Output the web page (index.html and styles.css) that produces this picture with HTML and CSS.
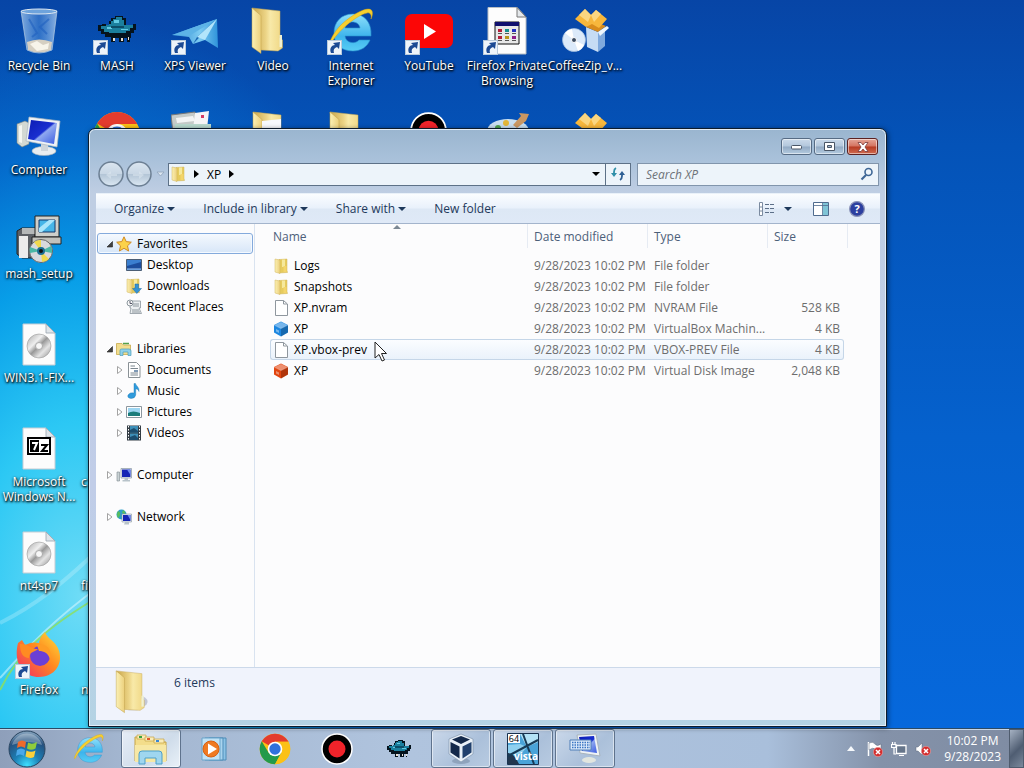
FILE: index.html
```html
<!DOCTYPE html>
<html lang="en">
<head>
    <meta charset="UTF-8">
    <meta name="viewport" content="width=device-width, initial-scale=1.0">
    <title>XP</title>
    <link rel="stylesheet" href="styles.css">
</head>
<body>
    <!-- shared icons -->
    <svg class="sprite" aria-hidden="true">
        <defs>
            <linearGradient id="g-folder" x1="0" x2="1"><stop offset="0" stop-color="#fbf0b4"/><stop offset="1" stop-color="#ecd07c"/></linearGradient>
            <linearGradient id="g-folder2" x1="0" x2="1"><stop offset="0" stop-color="#c9a548"/><stop offset=".45" stop-color="#ecd486"/><stop offset=".6" stop-color="#f8e9a8"/><stop offset="1" stop-color="#efd682"/></linearGradient>
            <linearGradient id="g-ie" x1="0" y1="0" x2="0" y2="1"><stop offset="0" stop-color="#8fe0fb"/><stop offset=".6" stop-color="#3db4ec"/><stop offset="1" stop-color="#58cdf5"/></linearGradient>
            <linearGradient id="g-glass" x1="0" x2="1"><stop offset="0" stop-color="#a9cdf0" stop-opacity=".75"/><stop offset=".5" stop-color="#4d8ddb" stop-opacity=".55"/><stop offset="1" stop-color="#b5d4f4" stop-opacity=".75"/></linearGradient>
            <linearGradient id="g-xps" x1="0" x2="1"><stop offset="0" stop-color="#2a86cf"/><stop offset=".6" stop-color="#7ccbf2"/><stop offset="1" stop-color="#2f93da"/></linearGradient>
            <linearGradient id="g-screen" x1="0" x2="1" y2="1"><stop offset="0" stop-color="#0b1cb4"/><stop offset=".5" stop-color="#1a2fd0"/><stop offset=".55" stop-color="#8fa8f0"/><stop offset="1" stop-color="#3a5be0"/></linearGradient>
            <linearGradient id="g-fox" x1="1" y1="0" x2="0" y2="1"><stop offset="0" stop-color="#ffe23d"/><stop offset=".45" stop-color="#ff8a1f"/><stop offset="1" stop-color="#f0246c"/></linearGradient>
            <radialGradient id="g-orb" cx=".5" cy=".95" r=".9"><stop offset="0" stop-color="#3fe0ff"/><stop offset=".4" stop-color="#1c7fb5"/><stop offset=".8" stop-color="#25517f"/><stop offset="1" stop-color="#7d9cb8"/></radialGradient>
            <linearGradient id="g-disc" x1="0" y1="0" x2="1" y2="1"><stop offset="0" stop-color="#a8a8a8"/><stop offset=".35" stop-color="#efefef"/><stop offset=".5" stop-color="#999"/><stop offset=".7" stop-color="#e4e4e4"/><stop offset="1" stop-color="#8e8e8e"/></linearGradient>
            <linearGradient id="g-round" x1="0" y1="0" x2="0" y2="1"><stop offset="0" stop-color="#dbe6f0"/><stop offset=".48" stop-color="#c9d7e5"/><stop offset=".52" stop-color="#b4c6d7"/><stop offset="1" stop-color="#dce8f3"/></linearGradient>
        </defs>

        <symbol id="shortcut" viewBox="0 0 15 15">
            <rect x=".5" y=".5" width="14" height="14" fill="#eef4fa" stroke="#b9cadb"/>
            <path d="M4 13C2 8 5 5 8 5L6 3 13 2 12 9 10 7C7 8 6 10 7 13Z" fill="#1c4a94"/>
        </symbol>
        <symbol id="folder" viewBox="0 0 48 48">
            <path d="M9 1 37 4V31L39.500 33V41L35 44 18 43Z" fill="url(#g-folder2)" stroke="#c9aa55" stroke-width=".5"/>
            <path d="M9 1 18 8.500V46.500L9 40Z" fill="url(#g-folder)" stroke="#c0a04a" stroke-width=".5"/>
            <path d="M36.500 28h2.500v12h-2.500z" fill="#f0f0d2"/>
        </symbol>
        <symbol id="folder-sm" viewBox="0 0 16 16">
            <path d="M6 1.500 14 1V12.500L14.500 14.500 6 15Z" fill="#e6cb5e" stroke="#d0b558" stroke-width=".5"/>
            <path d="M9 1.500H12V9H9Z" fill="#f6e99c"/>
            <path d="M2 1 7 2V15.500L2 14Z" fill="url(#g-folder)" stroke="#d0b558" stroke-width=".5"/>
            <path d="M10.500 8h3v6h-3z" fill="#f3d56b"/>
        </symbol>
        <symbol id="page" viewBox="0 0 48 48">
            <path d="M8 3H31L40 12V44H8Z" fill="#fcfcfc" stroke="#c6cdd4"/>
            <path d="M31 3V12H40Z" fill="#dfe5ea" stroke="#9aa5ae" stroke-width=".8"/>
        </symbol>
        <symbol id="file" viewBox="0 0 16 16">
            <path d="M2.500 .5H10.500L14.500 4V15.500H2.500Z" fill="#fff" stroke="#8f979e"/>
            <path d="M10.500 .5V4H14" fill="none" stroke="#8f979e"/>
        </symbol>
        <symbol id="disc" viewBox="0 0 48 48">
            <use href="#page"/>
            <circle cx="24" cy="25" r="12" fill="url(#g-disc)" stroke="#9b9b9b" stroke-width=".6"/>
            <circle cx="24" cy="25" r="3.500" fill="#f7f7f7" stroke="#aaa"/>
        </symbol>
        <symbol id="ie" viewBox="0 0 48 48">
            <path d="M26 7C14 7 7 15 7 26S14 44 26 44C34 44 40 40 43 33H32C29 37 19 37 18 29H44C45 15 37 7 26 7ZM18 21C19 13 32 13 33 21Z" fill="url(#g-ie)" stroke="#2a93cf" stroke-width=".6"/>
            <path d="M4 37C-1 44 4 27 15 17S42 -2 45 4C46 6 45 10 44 12C45 8 43 5 40 6C30 8 10 24 4 37Z" fill="#f6cf2e" stroke="#d9a512" stroke-width=".5"/>
        </symbol>
        <symbol id="chrome" viewBox="0 0 48 48">
            <circle cx="24" cy="24" r="23" fill="#fbc116"/>
            <path d="M24 24 4.100 12.500A23 23 0 0 1 43.900 12.500L44 13H24Z" fill="#e33b2e"/>
            <path d="M4.100 12.500A23 23 0 0 0 24 47L33.500 29.500 24 24 14.500 29.500Z" fill="#229a4a"/>
            <path d="M24 13H44A23 23 0 0 1 24 47L33.500 29.500Z" fill="#fbc116"/>
            <circle cx="24" cy="24" r="11" fill="#fff"/>
            <circle cx="24" cy="24" r="8.500" fill="#2f71dc"/>
        </symbol>
        <symbol id="record" viewBox="0 0 32 32">
            <circle cx="16" cy="16" r="15" fill="#000" stroke="#fff" stroke-width="1.500"/>
            <circle cx="16" cy="16" r="8.500" fill="#f0232a"/>
        </symbol>
        <symbol id="hat" viewBox="0 0 40 28" shape-rendering="crispEdges">
            <path d="M12 9V5H14V2H18V0H26V2H29V9H36V8H39V14H37V17H34V22H33V26H30V22H27V26H22V22H18V26H14V21H8V18H4V15H1V9H5V8Z" fill="#05131d"/>
            <path d="M14 8V5H16V3H19V1H25V4H27V9H36V12H33V15H29V17H12V16H7V13H4V10H9V9Z" fill="#1b7f9e"/>
            <path d="M17 4h5v3h-5zM10 11h5v2h-5zM24 13h7v1h-7z" fill="#62c9e2"/>
            <path d="M14 10h13v2H14z" fill="#0c4d68"/>
            <path d="M16 22h2v3h-2zM24 22h2v3h-2zM31 21h1v3h-1z" fill="#e9ded0"/>
        </symbol>
        <symbol id="box" viewBox="0 0 48 48">
            <path d="M25 20 37 25V45L26 40Z" fill="#c6dcf4"/>
            <path d="M37 25 44 20V39L37 45Z" fill="#7fa9dd"/>
            <path d="M25 20 32 14 45 19 37 25Z" fill="#d98c1c"/>
            <path d="M25 20 14 12 24 2 30 8 35 3 46 12 38 21 31 17Z" fill="#f7b73c"/>
            <path d="M30 8 24 2 18 8 27 15ZM30 8 35 3 40 7 33 15Z" fill="#fbd680"/>
            <path d="M37 25 46 19 48 21 39 29Z" fill="#eef6fd"/>
            <circle cx="13" cy="33" r="11.500" fill="#dceafa" stroke="#9fbbdc" stroke-width=".7"/>
            <path d="M13 33 4 26A11.500 11.500 0 0 1 11 22ZM13 33 23 38A11.500 11.500 0 0 1 17 44Z" fill="#fff"/>
            <circle cx="13" cy="33" r="2.500" fill="#3e4c60" stroke="#fff"/>
        </symbol>
        <symbol id="monitor" viewBox="0 0 48 48">
            <path d="M2 15 10 12 14 14V35L7 38 2 34Z" fill="#d3d9d3" stroke="#7d857f" stroke-width=".6"/>
            <path d="M4 17 7 16V34L4 33Z" fill="#f4f6f1"/>
            <ellipse cx="29" cy="42" rx="12" ry="4.500" fill="#e9edf0" stroke="#a5aeb5" stroke-width=".6"/>
            <path d="M26 34H33V42H26Z" fill="#cfd6dc"/>
            <path d="M14 8 45 12 42 38 11 32Z" fill="#eef2f5" stroke="#a9b4bd" stroke-width=".7"/>
            <path d="M16 11 42 14 39 35 13 30Z" fill="url(#g-screen)"/>
        </symbol>
        <symbol id="explorer" viewBox="0 0 36 32">
            <path d="M2 4H12L13 7H20L22 9H33V28H2Z" fill="#f3dd8b" stroke="#c5a345"/>
            <path d="M4 2h9v4H4z" fill="#f9ecb8" stroke="#c5a345" stroke-width=".7"/>
            <path d="M12 4h9v4h-9zM21 6h10v4H21z" fill="#f9ecb8" stroke="#c5a345" stroke-width=".7"/>
            <path d="M6 3h3v2H6z" fill="#36a241"/><path d="M14 5h3v2h-3z" fill="#e4572b"/><path d="M23 7h3v2h-3z" fill="#3a87d5"/>
            <path d="M2 12H33V29H2Z" fill="#f7e8a4"/>
            <path d="M6 31V21Q6 18 9 18H26Q29 18 29 21V31H23V25H12V31Z" fill="#9fd6ef" stroke="#4d9fc9"/>
        </symbol>
        <symbol id="cube" viewBox="0 0 16 16">
            <path d="M8 .5 15 4V11.500L8 15.500 1 11.500V4Z" fill="currentColor"/>
            <path d="M8 1 14.500 4 8 7.500 1.500 4Z" fill="#fff" opacity=".4"/>
            <path d="M8 7.500 15 4V11.500L8 15.500Z" fill="#000" opacity=".22"/>
            <path d="M3 8 6 9.500V12L3 10.500Z" fill="#fff" opacity=".4"/>
            <path d="M1 4 8 7.500 15 4" fill="none" stroke="#fff" stroke-width=".5" opacity=".6"/>
        </symbol>
        <symbol id="mini-pc" viewBox="0 0 16 16">
            <path d="M1 5H3.500V14H1Z" fill="#c9d2d4" stroke="#7c888d" stroke-width=".6"/>
            <path d="M5 1.500H15.500V11H5Z" fill="#e8edf0" stroke="#8795a0" stroke-width=".7"/>
            <path d="M6 2.500H14.500V10H6Z" fill="#1525b5"/><path d="M11 2.500H14.500V8Z" fill="#6f8cf0"/>
            <path d="M8.500 11H12V13H14V14.500H6.500V13H8.500Z" fill="#b8c3ca"/>
        </symbol>
        <symbol id="closed" viewBox="0 0 8 10"><path d="M1.500 1.500V8.500L6 5Z" fill="#fff" stroke="#a3a3a3"/></symbol>
        <symbol id="open" viewBox="0 0 8 10"><path d="M6.500 2.500V8H1Z" fill="#404040" stroke="#222" stroke-width=".6"/></symbol>
        <symbol id="badge-x" viewBox="0 0 10 10">
            <circle cx="5" cy="5" r="4.700" fill="#d42f2f" stroke="#f3b7b7" stroke-width=".5"/>
            <path d="M3 3 7 7M7 3 3 7" stroke="#fff" stroke-width="1.500"/>
        </symbol>
    </svg>

    <main class="desktop">
        <svg class="streaks" viewBox="0 0 300 300" aria-hidden="true">
            <path d="M0 250C25 222 55 190 100 158L300 60" fill="none" stroke="#e6fbff" stroke-width="2" opacity=".5"/>
            <path d="M0 195C30 180 60 160 110 110" fill="none" stroke="#e6fbff" stroke-width="4" opacity=".25"/>
            <path d="M0 262C18 225 45 200 100 168" fill="none" stroke="#8fe05a" stroke-width="2" opacity=".8"/>
        </svg>

        <div class="icon-row">
            <div class="icon">
                <svg viewBox="0 0 48 48">
                    <path d="M6 4 42 4 37 43Q24 49 12 43Z" fill="url(#g-glass)" stroke="#a9c4e0" stroke-width=".8"/>
                    <path d="M12 35Q24 30 37 35L36 43Q24 48 13 43Z" fill="#d5cfc2"/>
                    <path d="M15 37 22 34 28 38 34 36 33 42 22 44Z" fill="#f7f4ea"/>
                    <path d="M14 12 22 26 17 30M34 12 25 20 32 27" fill="none" stroke="#1f61c0" stroke-width="2" opacity=".6"/>
                    <ellipse cx="24" cy="4.500" rx="18" ry="2.500" fill="#6ea3dc" stroke="#dfe8f1"/>
                </svg>
                <span>Recycle Bin</span>
            </div>
            <div class="icon">
                <svg viewBox="0 0 48 48"><use href="#hat" x="4" y="9" width="40" height="28"/><use href="#shortcut" x="0" y="33" width="15" height="15"/></svg>
                <span>MASH</span>
            </div>
            <div class="icon">
                <svg viewBox="0 0 48 48">
                    <path d="M1 28 46 12 47 41 34 33 22 37 18 30Z" fill="url(#g-xps)"/>
                    <path d="M46 12 22 37 26 30Z" fill="#1b69b3"/><path d="M46 12 18 29 1 28Z" fill="#5db3e6"/>
                    <path d="M46 12 34 33 26 30Z" fill="#b2e5fb"/>
                    <use href="#shortcut" x="0" y="33" width="15" height="15"/>
                </svg>
                <span>XPS Viewer</span>
            </div>
            <div class="icon"><svg viewBox="0 0 48 48"><use href="#folder" x="-6"/></svg><span>Video</span></div>
            <div class="icon">
                <svg viewBox="0 0 48 48"><use href="#ie"/><use href="#shortcut" x="0" y="33" width="15" height="15"/></svg>
                <span>Internet<br>Explorer</span>
            </div>
            <div class="icon">
                <svg viewBox="0 0 48 48">
                    <rect x="0" y="7" width="48" height="34" rx="7" fill="#fc0606"/><path d="M19 17V32L31 24.500Z" fill="#fff"/>
                    <use href="#shortcut" x="0" y="33" width="15" height="15"/>
                </svg>
                <span>YouTube</span>
            </div>
            <div class="icon">
                <svg viewBox="0 0 48 48">
                    <path d="M5 .5H34L43 10V47H5Z" fill="#fdfdfd" stroke="#b8bec4"/><path d="M34 .5V10H43Z" fill="#e4e8eb" stroke="#777"/>
                    <path d="M12 15H36V37H12Z" fill="#e8e8e8" stroke="#111"/><path d="M12 15H36V19H12Z" fill="#10106e"/>
                    <path d="M15 22h4v3h-4zM15 29h4v3h-4z" fill="#b3203a"/><path d="M22 22h4v3h-4z" fill="#16918c"/><path d="M29 22h4v3h-4z" fill="#2430c0"/>
                    <path d="M22 29h4v3h-4z" fill="#b9951b"/><path d="M29 29h4v3h-4z" fill="#8d1b88"/>
                    <path d="M15 26.500h4M22 26.500h4M29 26.500h4M15 33.500h4M22 33.500h4M29 33.500h4" stroke="#555"/>
                    <use href="#shortcut" x="0" y="33" width="15" height="15"/>
                </svg>
                <span>Firefox Private<br>Browsing</span>
            </div>
            <div class="icon"><svg viewBox="0 0 48 48"><use href="#box"/></svg><span>CoffeeZip_v...</span></div>
        </div>

        <div class="icon-row">
            <div class="icon"><svg viewBox="0 0 48 48"><use href="#monitor" y="-2"/></svg><span>Computer</span></div>
            <div class="icon"><svg viewBox="0 0 48 48"><use href="#chrome"/></svg></div>
            <div class="icon">
                <svg viewBox="0 0 48 48"><path d="M0 4 24 1 26 12 22 22H2Z" fill="#c6cbc9" stroke="#777"/><path d="M5 7 22 5 24 10 6 12Z" fill="#f3f4f4"/><path d="M24 2 38 0 36 18H22Z" fill="#f5f5f6"/><path d="M4 13H40V24H4Z" fill="#b8d9ce"/><path d="M30 4h3v3h-3z" fill="#d33b64"/></svg>
            </div>
            <div class="icon"><svg viewBox="0 0 48 48"><use href="#folder" x="-5"/><path d="M13 10 32 8V30H13Z" fill="#f7f9fc"/></svg></div>
            <div class="icon"><svg viewBox="0 0 48 48"><use href="#folder" x="-6"/></svg></div>
            <div class="icon"><svg viewBox="0 0 48 48"><use href="#record" x="5" y="1" width="37" height="37"/></svg></div>
            <div class="icon">
                <svg viewBox="0 0 48 48"><ellipse cx="25" cy="20" rx="21" ry="12" fill="#c8def0"/><circle cx="15" cy="17" r="3" fill="#4ea34f"/><circle cx="23" cy="12" r="3" fill="#e3b637"/><path d="M30 14 38 5 36 2 46 3 43 10 34 17Z" fill="#c99763"/></svg>
            </div>
            <div class="icon"><svg viewBox="0 0 48 48"><use href="#box"/></svg></div>
        </div>

        <div class="icon-row">
            <div class="icon">
                <svg viewBox="0 0 48 48">
                    <path d="M2 16 7 13H20V43H7L2 39Z" fill="#5c6065" stroke="#222"/><path d="M4 21h9v22H4z" fill="#ececec"/><path d="M7 13H20V19H7Z" fill="#b5b8b8"/>
                    <path d="M20 1H44V22H20Z" fill="#cfd0cb" stroke="#222"/><path d="M24 5H40V17H24Z" fill="#46b5e8" stroke="#16386b"/><path d="M24 13 34 5H40L27 17H24Z" fill="#a9e5fb"/>
                    <path d="M17 22H46V29H17Z" fill="#c2c2bc" stroke="#222"/>
                    <circle cx="26" cy="36" r="11.500" fill="#d8d9dc" stroke="#666"/>
                    <path d="M26 36 19 27A11.500 11.500 0 0 1 26 25ZM26 36 34 44A11.500 11.500 0 0 1 27 47Z" fill="#efd94d"/><path d="M26 36 36 31A11.500 11.500 0 0 1 37 38ZM26 36 15 38A11.500 11.500 0 0 1 15 32Z" fill="#4bb7a5"/>
                    <circle cx="26" cy="36" r="3" fill="#111" stroke="#1d6f94" stroke-width="2"/>
                </svg>
                <span>mash_setup</span>
            </div>
        </div>

        <div class="icon-row">
            <div class="icon"><svg viewBox="0 0 48 48"><use href="#disc" y="2"/></svg><span>WIN3.1-FIX...</span></div>
        </div>

        <div class="icon-row">
            <div class="icon">
                <svg viewBox="0 0 48 48">
                    <use href="#page" y="2"/>
                    <path d="M13 15H35V31H13Z" fill="#fff" stroke="#000" stroke-width="2"/><path d="M15 17H24V29H15Z" fill="#000"/>
                    <path d="M17 20H22L19 27" fill="none" stroke="#fff" stroke-width="2"/><path d="M26 22H32L27 28H33" fill="none" stroke="#000" stroke-width="2"/>
                </svg>
                <span>Microsoft<br>Windows N...</span>
            </div>
            <div class="icon covered"><svg viewBox="0 0 48 48"></svg><span>c</span></div>
        </div>

        <div class="icon-row">
            <div class="icon"><svg viewBox="0 0 48 48"><use href="#disc" y="2"/></svg><span>nt4sp7</span></div>
            <div class="icon covered"><svg viewBox="0 0 48 48"></svg><span>fi</span></div>
        </div>

        <div class="icon-row">
            <div class="icon">
                <svg viewBox="0 0 48 48">
                    <path d="M3 12 7 9 10 14C16 11 20 11 24 12 25 6 28 3 30 1 32 7 38 9 41 14 50 26 44 46 24 46 8 46-2 32 3 12Z" fill="url(#g-fox)"/>
                    <circle cx="25" cy="25" r="10" fill="#6b3fd6"/>
                    <path d="M5 13C12 12 16 18 23 18 19 22 14 20 14 27 8 27 5 22 5 13Z" fill="#ff8b22"/>
                    <path d="M22 14C32 11 38 20 35 28 33 22 29 20 24 20Z" fill="#ff9c24"/>
                    <use href="#shortcut" x="0" y="33" width="15" height="15"/>
                </svg>
                <span>Firefox</span>
            </div>
            <div class="icon covered"><svg viewBox="0 0 48 48"></svg><span>n</span></div>
        </div>

        <section class="window" aria-label="XP">
            <div class="captions">
                <button aria-label="Minimize"><svg width="12" height="6"><rect x=".5" y="1.500" width="10" height="3.500" rx="1" fill="#fff" stroke="#4a5666"/></svg></button>
                <button aria-label="Maximize"><svg width="12" height="10"><path d="M.5 .5H10.500V8.500H.5ZM3.500 3.500V5.500H7.500V3.500Z" fill="#fff" fill-rule="evenodd" stroke="#4a5666"/></svg></button>
                <button class="close" aria-label="Close"><svg width="12" height="10"><path d="M1 .5H4L6 3 8 .5H11L8 5 11 9.500H8L6 7 4 9.500H1L4 5Z" fill="#fff" stroke="#7a3a3a" stroke-width=".8"/></svg></button>
            </div>

            <div class="address-row">
                <button class="round" aria-label="Back"><svg width="26" height="26"><circle cx="13" cy="13" r="12" fill="url(#g-round)" stroke="#6c7f93" stroke-width="1.500"/><path d="M8 14 13 10V13H19V15H13V18Z" fill="#dfe9f2" opacity=".5"/></svg></button>
                <button class="round" aria-label="Forward"><svg width="26" height="26"><circle cx="13" cy="13" r="12" fill="url(#g-round)" stroke="#6c7f93" stroke-width="1.500"/><path d="M18 14 13 10V13H7V15H13V18Z" fill="#dfe9f2" opacity=".5"/></svg></button>
                <button class="recent" aria-label="Recent pages"><svg width="9" height="6"><path d="M1 1H8L4.500 5Z" fill="#dce6f1" stroke="#8fa3ba" stroke-width=".8"/></svg></button>
                <div class="address">
                    <svg class="small-icon"><use href="#folder-sm"/></svg>
                    <svg class="crumb-arrow" viewBox="0 0 5 8"><path d="M0 0V8L5 4Z"/></svg>
                    <button class="crumb">XP</button>
                    <svg class="crumb-arrow" viewBox="0 0 5 8"><path d="M0 0V8L5 4Z"/></svg>
                    <button class="drop" aria-label="Previous locations"><i class="caret"></i></button>
                    <button class="refresh" aria-label="Refresh"><svg width="16" height="14"><path d="M4 8V5Q4 2 6 1" fill="none" stroke="#2f8fa8" stroke-width="1.800"/><path d="M1 6H7L4 10Z" fill="#2f8fa8"/><path d="M12 6V9Q12 12 10 13" fill="none" stroke="#2d5f94" stroke-width="1.800"/><path d="M9 8H15L12 4Z" fill="#2d5f94"/></svg></button>
                </div>
                <label class="search">
                    <input type="text" placeholder="Search XP" aria-label="Search XP">
                    <svg width="14" height="14"><circle cx="8.500" cy="5" r="3.500" fill="#eef5fb" stroke="#3f6796" stroke-width="1.600"/><path d="M6 8 1.500 12.500" stroke="#3f6796" stroke-width="2.200"/></svg>
                </label>
            </div>

            <div class="toolbar">
                <button>Organize <i class="caret"></i></button>
                <button>Include in library <i class="caret"></i></button>
                <button>Share with <i class="caret"></i></button>
                <button>New folder</button>
                <div class="tools">
                    <button aria-label="Change your view"><svg width="16" height="14"><path d="M.5 .5H3.500V13.500H.5ZM.5 5H3.500M.5 9H3.500" fill="#fff" stroke="#7b8ba0"/><path d="M6 2.500H10M11 2.500H15M6 6.500H10M11 6.500H15M6 10.500H10M11 10.500H15" stroke="#5c6f88"/></svg></button>
                    <button class="view-more" aria-label="More options"><i class="caret"></i></button>
                    <button class="preview" aria-label="Show the preview pane"><svg width="16" height="14"><path d="M.5 .5H15.500V13.500H.5Z" fill="#fff" stroke="#4f6b8e"/><path d="M10 1H15V13H10Z" fill="#7fc4d6"/><path d="M1 3.500H15M9.500 1V13" stroke="#4f6b8e" stroke-width=".8"/></svg></button>
                    <button aria-label="Get help"><svg width="16" height="16"><circle cx="8" cy="8" r="7.400" fill="#2c3f9f" stroke="#8b93b8" stroke-width="1.200"/><text class="help-mark" x="8" y="12">?</text></svg></button>
                </div>
            </div>

            <div class="body">
                <nav>
                    <ul>
                        <li><a href="#" class="selected"><svg class="twist"><use href="#open"/></svg><svg class="small-icon" viewBox="0 0 16 16"><path d="M8 .8 10.200 5.600 15.300 6.200 11.500 9.800 12.600 15 8 12.300 3.400 15 4.500 9.800 .7 6.200 5.800 5.600Z" fill="#fcd24a" stroke="#d08a25"/></svg>Favorites</a>
                            <ul>
                                <li><a href="#"><svg class="twist"></svg><svg class="small-icon" viewBox="0 0 16 16"><path d="M.5 2.500H15.500V13.500H.5Z" fill="#3b7fd0" stroke="#4c5e75"/><path d="M1 9 15 5V12H1Z" fill="#1c4d9d"/><path d="M1 12H15" stroke="#9cc4ee"/></svg>Desktop</a></li>
                                <li><a href="#"><svg class="twist"></svg><svg class="small-icon" viewBox="0 0 16 16"><use href="#folder-sm" x="-1"/><path d="M9 6H12.500V10.500H15.500L10.800 15.500 6.500 10.500H9Z" fill="#3493d4" stroke="#1d6ba6" stroke-width=".5"/></svg>Downloads</a></li>
                                <li><a href="#"><svg class="twist"></svg><svg class="small-icon" viewBox="0 0 16 16"><path d="M6 2H14.500V9H13L15.500 14.500H4L5 9H4V6Z" fill="#eceff1" stroke="#8c969d" stroke-width=".8"/><path d="M7 5H13M7 7H13M6 11H13M6 13H14" stroke="#8c969d"/><circle cx="4" cy="4" r="3" fill="#f8f8f8" stroke="#8c969d"/><path d="M4 2V4.500H6" fill="none" stroke="#556"/></svg>Recent Places</a></li>
                            </ul>
                        </li>
                        <li><a href="#"><svg class="twist"><use href="#open"/></svg><svg class="small-icon" viewBox="0 0 16 16"><path d="M.5 2.500H6L7.500 4H14.500V13.500H.5Z" fill="#f2dd8e" stroke="#c8a94d" stroke-width=".8"/><path d="M7 2.500H13" stroke="#55a04a" stroke-width="1.500"/><path d="M4 14.500V9.500Q4 8 5.500 8H13Q15 8 15 10V14.500H12V11H7V14.500Z" fill="#8fd0e8" stroke="#4a9dbb" stroke-width=".7"/></svg>Libraries</a>
                            <ul>
                                <li><a href="#"><svg class="twist"><use href="#closed"/></svg><svg class="small-icon" viewBox="0 0 16 16"><path d="M2.500 .5H10.500L14 4V15.500H2.500Z" fill="#fff" stroke="#8a9196"/><path d="M4.500 4H9M4.500 6.500H12M4.500 11H12M4.500 13H12" stroke="#7b868f"/><path d="M8 8h4v2H8z" fill="#7d98b5"/></svg>Documents</a></li>
                                <li><a href="#"><svg class="twist"><use href="#closed"/></svg><svg class="small-icon" viewBox="0 0 16 16"><path d="M8 .5H9.500C10 3 13.500 4 13 8.500 12.500 6.500 11 6 9.700 6V12Q9 15.500 5 15.500 1 15 2 12 4 9 8 10Z" fill="#2f9bdc" stroke="#1a73b0" stroke-width=".4"/></svg>Music</a></li>
                                <li><a href="#"><svg class="twist"><use href="#closed"/></svg><svg class="small-icon" viewBox="0 0 16 16"><path d="M.5 2.500H15.500V13.500H.5Z" fill="#fff" stroke="#8c979f"/><path d="M2 4H14V12H2Z" fill="#9ed6f2"/><path d="M2 9Q7 6 14 9V12H2Z" fill="#1b7c7b"/></svg>Pictures</a></li>
                                <li><a href="#"><svg class="twist"><use href="#closed"/></svg><svg class="small-icon" viewBox="0 0 16 16"><path d="M1 .5H15V15.500H1Z" fill="#333c44"/><path d="M4 1H12V7.500H4ZM4 8.500H12V15H4Z" fill="#3d8fb8"/><path d="M4 5 8 3 12 6V7.500H4ZM4 12 9 10 12 13V15H4Z" fill="#1b4d6e"/><path d="M2.500 1V15M13.500 1V15" stroke="#fff" stroke-dasharray="1.500 1.500"/></svg>Videos</a></li>
                            </ul>
                        </li>
                        <li><a href="#"><svg class="twist"><use href="#closed"/></svg><svg class="small-icon"><use href="#mini-pc"/></svg>Computer</a></li>
                        <li><a href="#"><svg class="twist"><use href="#closed"/></svg><svg class="small-icon" viewBox="0 0 16 16"><circle cx="5.500" cy="5.500" r="5" fill="#2d9fc9"/><path d="M2 2Q5 3 4 6T2 9Q0 6 2 2ZM7 1Q10 3 9 5L6 4Z" fill="#58bd5c"/><path d="M6 5H15.500V13H6Z" fill="#e8edf0" stroke="#8795a0" stroke-width=".6"/><path d="M7 6H14.500V12H7Z" fill="#1525b5"/><path d="M11.500 6H14.500V11Z" fill="#6f8cf0"/><path d="M9 13H13V15.500H8Z" fill="#b8c3ca"/></svg>Network</a></li>
                    </ul>
                </nav>

                <div class="files">
                    <table>
                        <colgroup><col class="col-name"><col class="col-date"><col class="col-type"><col class="col-size"><col class="col-end"></colgroup>
                        <thead>
                            <tr><th class="sorted">Name</th><th>Date modified</th><th>Type</th><th colspan="2">Size</th></tr>
                        </thead>
                        <tbody>
                            <tr><td><svg class="small-icon"><use href="#folder-sm"/></svg>Logs</td><td>9/28/2023 10:02 PM</td><td>File folder</td><td></td></tr>
                            <tr><td><svg class="small-icon"><use href="#folder-sm"/></svg>Snapshots</td><td>9/28/2023 10:02 PM</td><td>File folder</td><td></td></tr>
                            <tr><td><svg class="small-icon"><use href="#file"/></svg>XP.nvram</td><td>9/28/2023 10:02 PM</td><td>NVRAM File</td><td>528 KB</td></tr>
                            <tr><td><svg class="small-icon blue"><use href="#cube"/></svg>XP</td><td>9/28/2023 10:02 PM</td><td>VirtualBox Machin...</td><td>4 KB</td></tr>
                            <tr class="hover"><td><svg class="small-icon"><use href="#file"/></svg>XP.vbox-prev</td><td>9/28/2023 10:02 PM</td><td>VBOX-PREV File</td><td>4 KB</td></tr>
                            <tr><td><svg class="small-icon red"><use href="#cube"/></svg>XP</td><td>9/28/2023 10:02 PM</td><td>Virtual Disk Image</td><td>2,048 KB</td></tr>
                        </tbody>
                    </table>
                </div>
            </div>

            <div class="details">
                <svg width="44" height="44" viewBox="0 0 48 48"><path d="M37 28Q46 32 42 38L32 44H22Z" fill="#8b93a8" opacity=".45"/><use href="#folder"/></svg>
                <span>6 items</span>
            </div>
        </section>

        <svg class="pointer" width="14" height="22" viewBox="0 0 14 22"><path d="M1 1V17L5 13.500 8 20 10.500 19 7.500 12.500H12.500Z" fill="#fff" stroke="#222"/></svg>
    </main>

    <footer class="taskbar">
        <button class="start" aria-label="Start">
            <svg width="38" height="38" viewBox="0 0 38 38">
                <circle cx="19" cy="19" r="18" fill="url(#g-orb)" stroke="#2a4560"/>
                <path d="M4 15A15.500 15.500 0 0 1 34 15Q19 9 4 15Z" fill="#fff" opacity=".3"/>
                <path d="M10 12Q14 9 18 12L17 18Q13 15 9 18Z" fill="#ee6a2b"/><path d="M20 12.500Q24 15 29 12L27.500 18.500Q23 21 19 18.500Z" fill="#8fcc3c"/>
                <path d="M9 20Q13 17 17 20L16 26Q12 23 8 26Z" fill="#4aa8ea"/><path d="M18.500 20.500Q23 23 27.500 20.500L26 27Q22 29 17.500 26.500Z" fill="#fbd03a"/>
            </svg>
        </button>
        <button aria-label="Internet Explorer"><svg width="32" height="32"><use href="#ie"/></svg></button>
        <button class="running active" aria-label="Windows Explorer"><svg width="36" height="32"><use href="#explorer"/></svg></button>
        <button aria-label="Media Player">
            <svg width="32" height="32" viewBox="0 0 32 32"><path d="M12 5H29V27H12Z" fill="#8cc3e6" stroke="#4e8db8"/><path d="M8 5H26V27H8Z" fill="#a9d4ee" stroke="#4e8db8"/><path d="M5 5H23V27H5Z" fill="#c1e2f5" stroke="#6ba5cb"/><circle cx="14" cy="16" r="8" fill="#ef7a22" stroke="#d9600f"/><path d="M11 10.500V21.500L20 16Z" fill="#fff"/></svg>
        </button>
        <button aria-label="Chrome"><svg width="32" height="32"><use href="#chrome"/></svg></button>
        <button aria-label="Recorder"><svg width="32" height="32"><use href="#record"/></svg></button>
        <button aria-label="MASH"><svg width="26" height="20"><use href="#hat"/></svg></button>
        <button class="running" aria-label="VirtualBox">
            <svg width="32" height="32" viewBox="0 0 32 32"><ellipse cx="16" cy="28" rx="9" ry="3" fill="#8fa3bc"/><path d="M16 1 28 6V21L16 29 4 21V6Z" fill="#e9f0f7" stroke="#8296ad" stroke-width=".7"/><path d="M16 3 25 6.500 16 11 7 6.500Z" fill="#14294a"/><path d="M5.500 9 14.500 13.500V25.500L5.500 19.500Z" fill="#14294a"/><path d="M26.500 9 17.500 13.500V25.500L26.500 19.500Z" fill="#21406c"/></svg>
        </button>
        <button class="running" aria-label="Virtual machine">
            <svg width="32" height="32" viewBox="0 0 32 32"><path d="M.5 .5H31.500V31.500H.5Z" fill="#4aa3d8" stroke="#1a3350"/><path d="M13 1H31V9L20 14Z" fill="#b4e3f7"/><path d="M13 11 20 14 14 21 1 22V12Z" fill="#8fd0ef"/><path d="M1 20Q7 20 12 31H1Z" fill="#22364e"/><path d="M1 23 31 7M16 1 27 31" stroke="#173a56" stroke-width="2"/><path d="M1 1H13V10H1Z" fill="#fff"/><text class="bits" x="7" y="9">64</text><text class="vista" x="19" y="27">vista</text></svg>
        </button>
        <button class="running" aria-label="On-Screen Keyboard">
            <svg width="32" height="32" viewBox="0 0 32 32"><ellipse cx="20" cy="27" rx="7" ry="3" fill="#e2e6df"/><path d="M8 2 27 1 31 23 11 20Z" fill="#eef2f5" stroke="#a9b4bd"/><path d="M10 4 25 3 28 20 13 18Z" fill="url(#g-screen)"/><path d="M1 7H22V17H1Z" fill="#dbe9f8" stroke="#4f7fb8"/><path d="M3 9.500H21M3 12H21M3 14.500H21" stroke="#3a76c4" stroke-width="1.500" stroke-dasharray="1.500 1"/></svg>
        </button>

        <div class="tray">
            <button aria-label="Show hidden icons"><svg width="8" height="5"><path d="M0 5 4 0 8 5Z" fill="#f6f9fc"/></svg></button>
            <button aria-label="Action Center"><svg width="16" height="16"><path d="M1.500 1V15" stroke="#fff" stroke-width="1.500"/><path d="M2 2Q6 0 8 3T14 3V9Q10 10 8 8T2 9Z" fill="#fff" stroke="#5e6b7c" stroke-width=".5"/><use href="#badge-x" x="6" y="6" width="10" height="10"/></svg></button>
            <button aria-label="Network"><svg width="16" height="16"><path d="M5.500 4.500H15V12.500H5.500Z" fill="#66758a" stroke="#fff" stroke-width="1.300"/><path d="M8 14.500H13M.5 3.500H5V6.500H.5ZM1.500 1V3M4 1V3M3 7V13H5" fill="none" stroke="#fff" stroke-width="1.200"/></svg></button>
            <button aria-label="Volume"><svg width="16" height="16"><path d="M1 6H3L7 2V14L3 10H1Z" fill="#fff" stroke="#5e6b7c" stroke-width=".5"/><use href="#badge-x" x="6" y="5" width="10" height="10"/></svg></button>
            <time datetime="2023-09-28T22:02">10:02 PM<br>9/28/2023</time>
            <button class="show-desktop" aria-label="Show desktop"></button>
        </div>
    </footer>
</body>
</html>
```
FILE: styles.css
```css
* {
    box-sizing: border-box;
}

body {
    margin: 0;
    height: 100vh;
    display: flex;
    flex-direction: column;
    overflow: hidden;
    font-family: "Open Sans", "Noto Sans", sans-serif;
    font-size: 12px;
    line-height: 15px;
    color: #000;
}

button {
    margin: 0;
    padding: 0;
    border: none;
    background: none;
    font: inherit;
    color: inherit;
}

svg {
    display: block;
    flex: none;
}

ul {
    list-style: none;
    margin: 0;
    padding: 0;
}

a {
    color: inherit;
    text-decoration: none;
}

.sprite {
    position: absolute;
    width: 0;
    height: 0;
}

.small-icon {
    width: 16px;
    height: 16px;
}

.caret {
    display: inline-block;
    border: 4px solid transparent;
    border-top-color: currentColor;
    border-bottom: none;
}

/* desktop */
.desktop {
    position: relative;
    flex: 1;
    min-height: 0;
    background:
        radial-gradient(ellipse 36% 80% at 8% 82%, #6fdcf6 0, #2cc8f4 30%, rgba(8, 165, 236, 0.9) 55%, rgba(4, 125, 220, 0.5) 78%, transparent 100%),
        linear-gradient(#0745a6 0, #0453b8 20%, #0561cd 60%, #0668dc 100%);
}

.streaks {
    position: absolute;
    left: 0;
    bottom: 0;
    width: 300px;
    height: 300px;
}

.icon-row {
    display: flex;
    height: 104px;
    position: relative;
}

.icon {
    width: 78px;
    padding-top: 7px;
    display: flex;
    flex-direction: column;
    align-items: center;
    gap: 3px;
    color: #fff;
    text-align: center;
    white-space: nowrap;
    text-shadow: 1px 1px 2px #000, 0 1px 3px #000;
}

.icon > svg {
    width: 48px;
    height: 48px;
}

.covered {
    align-items: flex-start;
    padding-left: 3px;
}

/* explorer window */
.window {
    position: absolute;
    top: 128px;
    right: 137px;
    bottom: 1px;
    left: 88px;
    display: flex;
    flex-direction: column;
    padding: 0 6px 6px 7px;
    border: 1px solid #0d1c2c;
    border-radius: 7px 7px 0 0;
    background: linear-gradient(#9ab5cf, #a9c1da 30px, #bfcee3 64px, #c1cde8 60%, #b4d3e4);
    box-shadow: inset 0 0 0 1px #e3eef8, 1px 1px 5px rgba(0, 0, 0, 0.5);
}

.captions {
    display: flex;
    justify-content: flex-end;
    gap: 2px;
    padding: 9px 2px 0 0;
}

.captions button {
    display: grid;
    place-items: center;
    width: 31px;
    height: 17px;
    border: 1px solid #566b84;
    border-radius: 3px;
    background: linear-gradient(#cbdaea, #b3c7dc 48%, #92aac4 52%, #b4cbe0);
    box-shadow: inset 0 0 0 1px rgba(255, 255, 255, 0.5);
}

.captions .close {
    border-color: #5c2222;
    background: linear-gradient(#e5a698, #d4735f 48%, #b73a22 52%, #cf6b50);
}

.address-row {
    display: flex;
    align-items: center;
    gap: 2px;
    padding: 6px 1px 6px 2px;
}

.recent {
    width: 12px;
    padding-left: 2px;
}

.address {
    flex: 1;
    display: flex;
    align-items: center;
    height: 23px;
    padding-left: 1px;
    border: 1px solid #5d7187;
    background: #edf4fa;
}

.crumb-arrow {
    width: 5px;
    height: 8px;
    margin: 0 8px;
}

.drop {
    display: flex;
    margin-left: auto;
    padding: 0 5px;
}

.refresh {
    display: grid;
    place-items: center;
    width: 25px;
    height: 21px;
    border-left: 1px solid #5d7187;
}

.search {
    display: flex;
    align-items: center;
    width: 31%;
    height: 23px;
    margin-left: 4px;
    padding: 0 4px 0 8px;
    border: 1px solid #8195ac;
    background: #edf4fa;
}

.search input {
    flex: 1;
    min-width: 0;
    padding: 0;
    border: none;
    outline: none;
    background: none;
    font: inherit;
}

.search input::placeholder {
    color: #6d7278;
    font-style: italic;
}

.toolbar {
    display: flex;
    align-items: center;
    gap: 28px;
    height: 31px;
    padding: 0 15px 0 18px;
    border-top: 1px solid #e9f1f9;
    border-bottom: 1px solid #a3b4cc;
    background: linear-gradient(#fbfdff, #e9f1fb 48%, #dde8f5 52%, #dfe9f7);
    color: #1e395b;
}

.toolbar .caret {
    margin-bottom: 2px;
}

.tools {
    display: flex;
    align-items: center;
    margin-left: auto;
}

.view-more {
    padding: 0 21px 0 9px;
}

.preview {
    margin-right: 20px;
}

.help-mark {
    fill: #fff;
    font-size: 11px;
    font-weight: bold;
    text-anchor: middle;
}

.body {
    flex: 1;
    display: flex;
    min-height: 0;
    background: #fcfcfd;
}

nav {
    width: 159px;
    padding: 9px 1px 0;
    border-right: 1px solid #d9e3f0;
}

nav > ul > li {
    margin-bottom: 21px;
}

nav a {
    display: flex;
    align-items: center;
    height: 21px;
    padding-left: 8px;
    border: 1px solid transparent;
}

nav ul ul a {
    padding-left: 18px;
}

nav .small-icon {
    margin: 0 5px 0 2px;
}

.twist {
    width: 8px;
    height: 10px;
}

nav .selected {
    border-color: #84aadc;
    border-radius: 3px;
    background: linear-gradient(#f5f9fe, #d7e6f8);
    box-shadow: inset 0 0 0 1px #f4f9ff;
}

.files {
    flex: 1;
    padding-left: 15px;
}

table {
    width: 578px;
    table-layout: fixed;
    border-collapse: separate;
    border-spacing: 0;
}

.col-name {
    width: 258px;
}

.col-date,
.col-type {
    width: 120px;
}

.col-size {
    width: 76px;
}

.col-end {
    width: 4px;
}

th {
    height: 24px;
    padding: 0 0 0 6px;
    border-right: 1px solid #e6ebf3;
    color: #4c607a;
    font-weight: normal;
    text-align: left;
}

.sorted {
    position: relative;
    padding-left: 3px;
}

.sorted::before {
    content: "";
    position: absolute;
    top: 1px;
    left: 123px;
    border: 4px solid transparent;
    border-bottom-color: #7c8894;
    border-top: none;
}

tbody::before {
    content: "";
    display: block;
    height: 7px;
}

td {
    height: 21px;
    padding: 0 0 0 6px;
    border: 0 solid #c5d6e8;
    color: #6d6d6d;
    white-space: nowrap;
}

td:first-child {
    padding-left: 3px;
    color: #000;
}

td:nth-child(4) {
    padding-right: 4px;
    text-align: right;
}

td .small-icon {
    display: inline-block;
    margin: -3px 5px -3px 0;
    vertical-align: -1px;
}

.hover td {
    border-width: 1px 0;
    background: linear-gradient(#fbfdff, #eaf2fb);
}

.hover td:first-child {
    padding-left: 2px;
    border-left-width: 1px;
    border-radius: 3px 0 0 3px;
}

.hover td:last-child {
    padding-right: 3px;
    border-right-width: 1px;
    border-radius: 0 3px 3px 0;
}

.blue {
    color: #1b86e0;
}

.red {
    color: #e2450f;
}

.details {
    display: flex;
    height: 53px;
    padding: 2px 12px;
    gap: 22px;
    border-top: 1px solid #ccd9ea;
    background: #f0f3fc;
    color: #1e395b;
    line-height: 25px;
}

.pointer {
    position: absolute;
    left: 374px;
    top: 341px;
}

/* taskbar */
.taskbar {
    display: flex;
    align-items: center;
    gap: 2px;
    height: 40px;
    border-top: 1px solid #2b4a66;
    background: linear-gradient(90deg, #8e9fba 0, #a3b6d0 12%, #b0c4de 40%, #a9bfdb 75%, #8492a9 86%, #7f8ca3 100%);
    box-shadow: inset 0 1px 0 #c6d6e8;
}

.taskbar > button {
    display: grid;
    place-items: center;
    width: 60px;
    height: 39px;
}

.taskbar > .start {
    width: 57px;
    padding-right: 3px;
}

.taskbar .running {
    border: 1px solid #5f738d;
    border-radius: 3px;
    background: linear-gradient(135deg, #cad8ea, #abc0da 60%, #b8cbe1);
    box-shadow: inset 0 0 0 1px rgba(255, 255, 255, 0.5);
}

.taskbar .active {
    background: linear-gradient(135deg, #e6edf6, #cfdcea 60%, #e9f1f8);
}

.bits {
    font-size: 9px;
    text-anchor: middle;
}

.vista {
    fill: #fff;
    font-size: 10px;
    font-weight: bold;
    text-anchor: middle;
}

.tray {
    display: flex;
    align-items: center;
    gap: 8px;
    height: 39px;
    margin-left: auto;
    color: #fff;
}

.tray button:first-child {
    margin-right: 4px;
}

time {
    margin-left: 5px;
    line-height: 16px;
    text-align: center;
}

.show-desktop {
    width: 15px;
    height: 39px;
    border: 1px solid #4f5c6e;
    background: linear-gradient(135deg, #a5b1c2, #4f5d72 55%, #7b899c);
}
```
